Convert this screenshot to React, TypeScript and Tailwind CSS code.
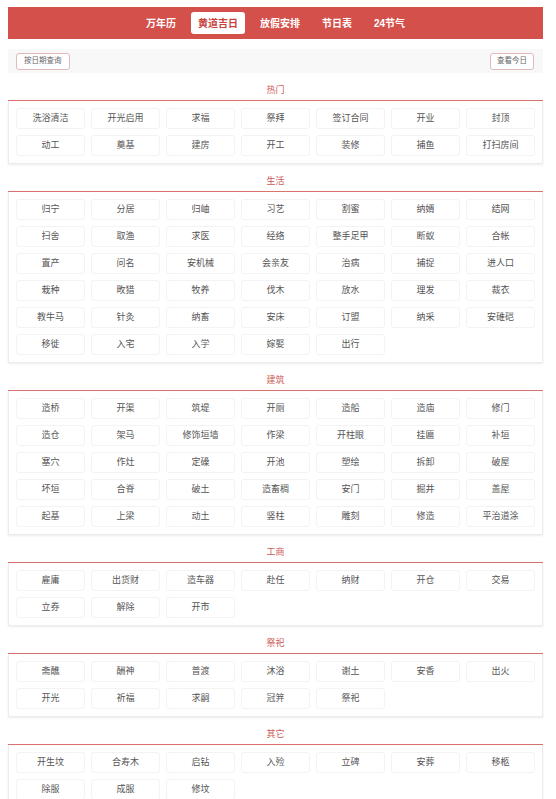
import React from "react";

const sections: { title: string; items: string[] }[] = [
  {
    title: "热门",
    items: ["洗浴清洁", "开光启用", "求福", "祭拜", "签订合同", "开业", "封顶", "动工", "奠基", "建房", "开工", "装修", "捕鱼", "打扫房间"],
  },
  {
    title: "生活",
    items: [
      "归宁", "分居", "归岫", "习艺", "割蜜", "纳婿", "结网",
      "扫舍", "取渔", "求医", "经络", "整手足甲", "断蚁", "合帐",
      "置产", "问名", "安机械", "会亲友", "治病", "捕捉", "进人口",
      "栽种", "畋猎", "牧养", "伐木", "放水", "理发", "裁衣",
      "教牛马", "针灸", "纳畜", "安床", "订盟", "纳采", "安碓硙",
      "移徙", "入宅", "入学", "嫁娶", "出行",
    ],
  },
  {
    title: "建筑",
    items: [
      "造桥", "开渠", "筑堤", "开厕", "造船", "造庙", "修门",
      "造仓", "架马", "修饰垣墙", "作梁", "开柱眼", "挂匾", "补垣",
      "塞穴", "作灶", "定磉", "开池", "塑绘", "拆卸", "破屋",
      "坏垣", "合脊", "破土", "造畜稠", "安门", "掘井", "盖屋",
      "起基", "上梁", "动土", "竖柱", "雕刻", "修造", "平治道涂",
    ],
  },
  {
    title: "工商",
    items: ["雇庸", "出货财", "造车器", "赴任", "纳财", "开仓", "交易", "立券", "解除", "开市"],
  },
  {
    title: "祭祀",
    items: ["斋醮", "酬神", "普渡", "沐浴", "谢土", "安香", "出火", "开光", "祈福", "求嗣", "冠笄", "祭祀"],
  },
  {
    title: "其它",
    items: ["开生坟", "合寿木", "启钻", "入殓", "立碑", "安葬", "移柩", "除服", "成服", "修坟"],
  },
];

const tabs = ["万年历", "黄道吉日", "放假安排", "节日表", "24节气"];

export default function App() {
  return (
    <div
      className="w-[556px] min-h-[799px] bg-white"
      style={{ fontFamily: '"Liberation Sans", "Noto Sans CJK SC", sans-serif' }}
    >
      <div className="ml-2 w-[535px] pt-[7px]">
        {/* Header */}
        <div className="h-[32px] bg-[#d4504b] flex items-center justify-center gap-[8px]">
          {tabs.map((t, i) => (
            <div
              key={t}
              className={
                i === 1
                  ? "h-[22px] px-[7px] flex items-center rounded-[3px] bg-white text-[#c8433e] text-[10px] font-bold"
                  : "h-[22px] px-[7px] flex items-center text-white text-[10px] font-bold"
              }
            >
              {t}
            </div>
          ))}
        </div>

        {/* Toolbar */}
        <div className="mt-[10px] h-[24px] bg-[#f8f8f8] flex items-center justify-between pl-[8px] pr-[9px]">
          <button className="h-[17px] px-[7px] bg-white border border-[#e2b8b8] rounded-[3px] text-[7.5px] text-[#666] leading-none">
            按日期查询
          </button>
          <button className="h-[17px] px-[6px] bg-white border border-[#e2b8b8] rounded-[3px] text-[7.5px] text-[#666] leading-none">
            查看今日
          </button>
        </div>

        {sections.map((s) => (
          <div key={s.title} className="mt-[10px]">
            <div className="h-[18px] border-b border-[#d97370] text-center text-[9px] leading-[15px] text-[#cc5a56]">
              {s.title}
            </div>
            <div className="bg-white border border-t-0 border-[#ececec] shadow-[0_1px_2px_rgba(0,0,0,0.08)] px-[7px] pt-[7px] pb-[7px] grid grid-cols-7 gap-[6px]">
              {s.items.map((it, idx) => (
                <div
                  key={it + idx}
                  className="h-[21px] flex items-center justify-center bg-white border border-[#f3f3f3] rounded-[3px] text-[9px] text-[#555]"
                >
                  {it}
                </div>
              ))}
            </div>
          </div>
        ))}
      </div>
    </div>
  );
}
